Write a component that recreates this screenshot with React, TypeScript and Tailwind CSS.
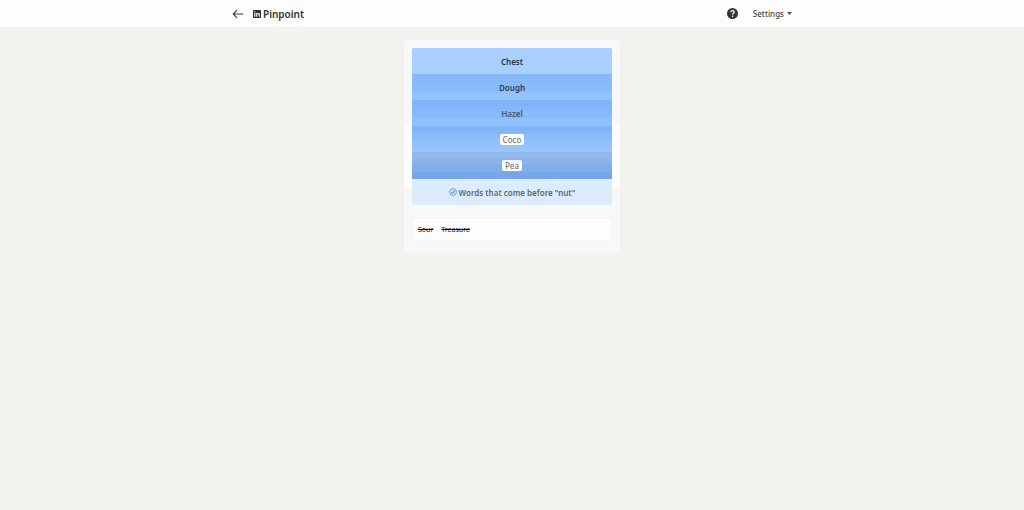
import React from 'react';

interface Clue {
  word: string;
  row: string;
  text: string;
}

const clues: Clue[] = [
  { word: 'Chest', row: 'h-[26px] bg-[#a9cffe]', text: 'text-[#2b3849]' },
  {
    word: 'Dough',
    row: 'h-[26px] bg-[linear-gradient(#87b9f8_0_9px,#8bbcfa_9px_18px,#93c2fc_18px)]',
    text: 'text-[#2b3f5b]',
  },
  {
    word: 'Hazel',
    row: 'h-[26px] bg-[linear-gradient(#80b4fa_0_6px,#85b7fa_6px_12px,#89baf9_12px_18px,#91c0fc_18px)]',
    text: 'text-[#465a73]',
  },
  {
    word: 'Coco',
    row: 'h-[26px] bg-[linear-gradient(#81b5f8_0_7px,#8abbfb_7px_13px,#90bffb_13px_20px,#98c4fb_20px)]',
    text: 'rounded-[2px] bg-[#fdfdfd] px-[3px] font-medium text-[#777777]',
  },
  {
    word: 'Pea',
    row: 'h-[27px] bg-[linear-gradient(#91b7eb_0_7px,#8bb3eb_7px_13px,#83adea_13px_20px,#75a6e7_20px)]',
    text: 'rounded-[2px] bg-[#fdfdfd] px-[3px] font-medium text-[#777777]',
  },
];

const guesses = ['Sour', 'Treasure'];

const Header: React.FC = () => (
  <header className="bg-[#fdfdfd]">
    <div className="mx-auto flex h-[27px] max-w-[560px] items-center justify-between">
      <div className="flex items-center">
        <button type="button" aria-label="Back" className="text-[#3c3c3c]">
          <svg width="12" height="10" viewBox="0 0 12 10" fill="none" stroke="currentColor" strokeWidth="1.1">
            <path d="M11.3 5H1.2M5 1.2L1.2 5L5 8.8" />
          </svg>
        </button>
        <svg className="ml-[9px]" width="8" height="8" viewBox="0 0 8 8">
          <rect width="8" height="8" rx="0.8" fill="#303030" />
          <path d="M1.3 3.1h1.1v3.6H1.3zM3.2 3.1h1v.5c.5-.9 2.6-.9 2.6 1v2.1H5.7V4.8c0-1.2-1.4-1-1.4 0v1.9H3.2z" fill="#fff" />
          <circle cx="1.85" cy="1.9" r="0.65" fill="#fff" />
        </svg>
        <h1 className="ml-[2px] text-[10px] leading-[14px] font-semibold text-[#303030]">Pinpoint</h1>
      </div>
      <div className="flex items-center gap-[15px]">
        <button type="button" aria-label="How to play">
          <svg width="11" height="11" viewBox="0 0 10 10" fill="none">
            <circle cx="5" cy="5" r="5" fill="#353535" />
            <path d="M3.5 3.9C3.5 1.9 6.6 2 6.6 3.8C6.6 4.9 5.1 4.8 5.1 6.1" stroke="#fff" strokeWidth="1.1" />
            <circle cx="5.1" cy="7.5" r="0.7" fill="#fff" />
          </svg>
        </button>
        <button type="button" className="flex items-center gap-[3px] text-[8px] leading-[12px] font-medium text-[#444444]">
          Settings
          <svg width="5" height="3" viewBox="0 0 5 3">
            <path d="M0 0h5L2.5 3z" fill="#505050" />
          </svg>
        </button>
      </div>
    </div>
  </header>
);

const App: React.FC = () => {
  return (
    <div className="min-h-screen bg-[#f3f2ee] font-['Noto_Sans','Open_Sans',sans-serif]">
      <Header />
      <main className="mx-auto mt-[13px] max-w-[216px] rounded-[4px] bg-[#f6f8fa] bg-[linear-gradient(transparent_83px,#fdfdfd_83px_148px,transparent_148px)] px-2 pt-2 pb-3">
        <section className="overflow-hidden rounded-[2px] text-center text-[8px] leading-[11px] font-semibold">
          {clues.map((clue) => (
            <div key={clue.word} className={`flex items-center justify-center ${clue.row}`}>
              <span className={clue.text}>{clue.word}</span>
            </div>
          ))}
          <div className="flex h-[26px] items-center justify-center gap-[2px] bg-[#dcecfe] text-[#5c6774]">
            <svg width="8" height="8" viewBox="0 0 8 8" fill="none">
              <circle cx="4" cy="4" r="3.5" fill="#c4defd" stroke="#6aa6f3" strokeWidth="0.9" />
              <path d="M2.3 4.1L3.6 5.4L5.7 2.6" stroke="#4c6f9e" strokeWidth="0.9" />
            </svg>
            <p>Words that come before "nut"</p>
          </div>
        </section>

        {/* Wrong guesses */}
        <ul className="mt-[13px] flex h-[23px] items-center gap-2 rounded-[2px] border border-[#f3f4f5] bg-[#fdfdfd] px-[5px] text-[7px] leading-[10px] font-normal text-[#111111]">
          {guesses.map((guess) => (
            <li key={guess} className="line-through">
              {guess}
            </li>
          ))}
        </ul>
      </main>
    </div>
  );
};

export default App;
